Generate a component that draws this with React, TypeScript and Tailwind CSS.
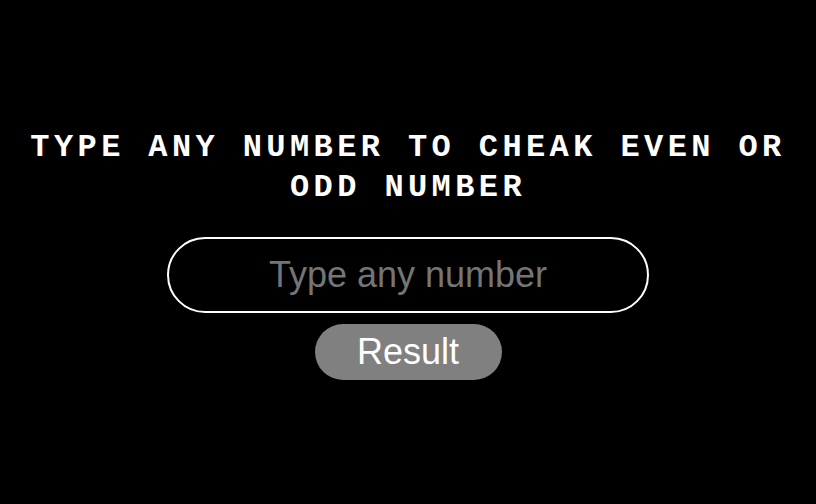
import React from "react";

export default function App() {
  return (
    <div className="w-full h-[504px] bg-black flex flex-col items-center justify-center pt-[4px]">
      <h1 className="text-white font-bold uppercase text-center text-[32px] leading-[40px] tracking-[4.4px] px-[20px] font-['Courier_New','Courier','Nimbus_Mono_PS','FreeMono','Liberation_Mono',monospace]">
        Type any number to cheak even or odd number
      </h1>
      <input
        type="text"
        placeholder="Type any number"
        className="mt-[29px] w-[482px] h-[76px] rounded-full border-2 border-white bg-black text-white text-center text-[36px] placeholder:text-[#757575] outline-none font-['Liberation_Sans',Arial,sans-serif]"
      />
      <button className="mt-[11px] w-[187px] h-[56px] rounded-full bg-[#808080] text-white text-[36px] leading-none font-['Liberation_Sans',Arial,sans-serif]">
        Result
      </button>
    </div>
  );
}
